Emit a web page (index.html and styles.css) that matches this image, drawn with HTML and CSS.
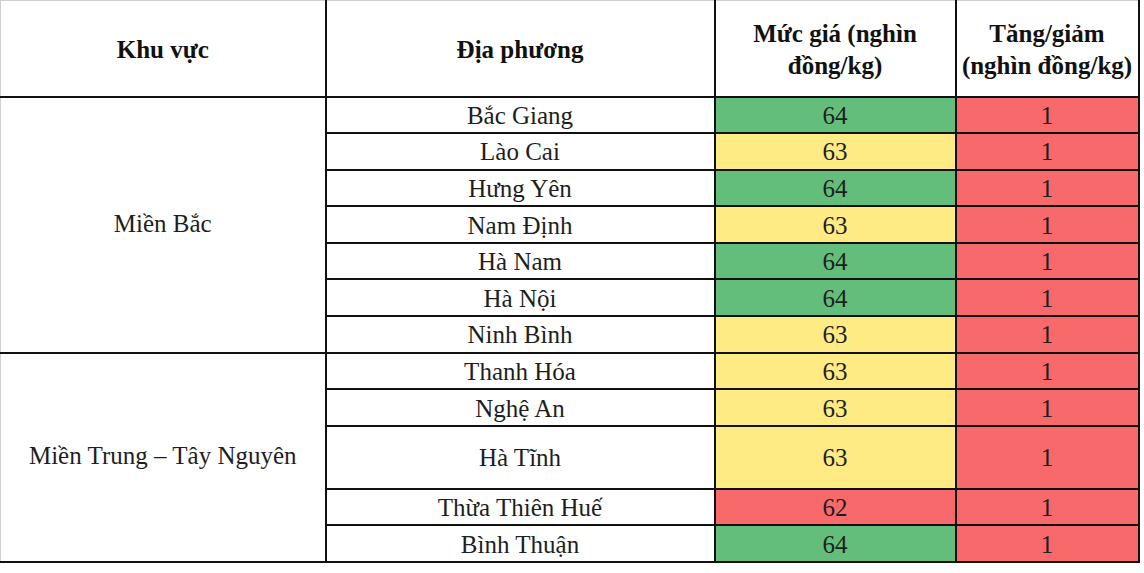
FILE: index.html
```html
<!DOCTYPE html>
<html lang="vi">
<head>
<meta charset="utf-8">
<link rel="stylesheet" href="styles.css">
</head>
<body>
<table class="price">
  <colgroup>
    <col class="c1"><col class="c2"><col class="c3"><col class="c4">
  </colgroup>
  <thead>
    <tr class="head">
      <th class="first">Khu vực</th>
      <th>Địa phương</th>
      <th>Mức giá (nghìn<br>đồng/kg)</th>
      <th>Tăng/giảm<br>(nghìn đồng/kg)</th>
    </tr>
  </thead>
  <tbody>
    <tr class="r"><td class="region first" rowspan="7">Miền Bắc</td><td>Bắc Giang</td><td class="g">64</td><td class="red">1</td></tr>
    <tr class="r"><td>Lào Cai</td><td class="y">63</td><td class="red">1</td></tr>
    <tr class="r"><td>Hưng Yên</td><td class="g">64</td><td class="red">1</td></tr>
    <tr class="r"><td>Nam Định</td><td class="y">63</td><td class="red">1</td></tr>
    <tr class="r"><td>Hà Nam</td><td class="g">64</td><td class="red">1</td></tr>
    <tr class="r"><td>Hà Nội</td><td class="g">64</td><td class="red">1</td></tr>
    <tr class="r"><td>Ninh Bình</td><td class="y">63</td><td class="red">1</td></tr>
    <tr class="r"><td class="region first sep" rowspan="5">Miền Trung – Tây Nguyên</td><td>Thanh Hóa</td><td class="y">63</td><td class="red">1</td></tr>
    <tr class="r"><td>Nghệ An</td><td class="y">63</td><td class="red">1</td></tr>
    <tr class="tall"><td>Hà Tĩnh</td><td class="y">63</td><td class="red">1</td></tr>
    <tr class="r"><td>Thừa Thiên Huế</td><td class="red">62</td><td class="red">1</td></tr>
    <tr class="r last"><td>Bình Thuận</td><td class="g">64</td><td class="red">1</td></tr>
  </tbody>
</table>
</body>
</html>
```

FILE: styles.css
```css
html, body {
  margin: 0;
  padding: 0;
  background: #ffffff;
}

body {
  font-family: "Liberation Serif", "Times New Roman", serif;
  color: #1e1e1e;
}

.price {
  border-collapse: collapse;
  table-layout: fixed;
  width: 1138px;
  border-top: 1px solid #cfcfcf;
  border-left: 1px solid #cfcfcf;
  font-family: "Liberation Serif", "Times New Roman", serif;
}

.c1 { width: 325px; }
.c2 { width: 389px; }
.c3 { width: 241px; }
.c4 { width: 183px; }

.price th,
.price td {
  border: 2px solid #111;
  text-align: center;
  vertical-align: middle;
  padding: 0;
  font-size: 25px;
  line-height: 30px;
}

.price th {
  font-weight: bold;
  line-height: 32px;
  border-top: 1px solid #cfcfcf;
  color: #111;
  padding-top: 3px;
}

.price .first {
  border-left: 1px solid #cfcfcf;
}

.head { height: 96px; }

.r { height: 36.6px; }
.tall { height: 63px; }

.price td {
  padding-top: 2px;
}

.price td.region {
  padding-top: 0;
  padding-bottom: 2px;
}

.sep {
  border-top: 2px solid #555;
}

.g { background: #63be7b; }
.y { background: #ffeb84; }
.red { background: #f8696b; }
```
